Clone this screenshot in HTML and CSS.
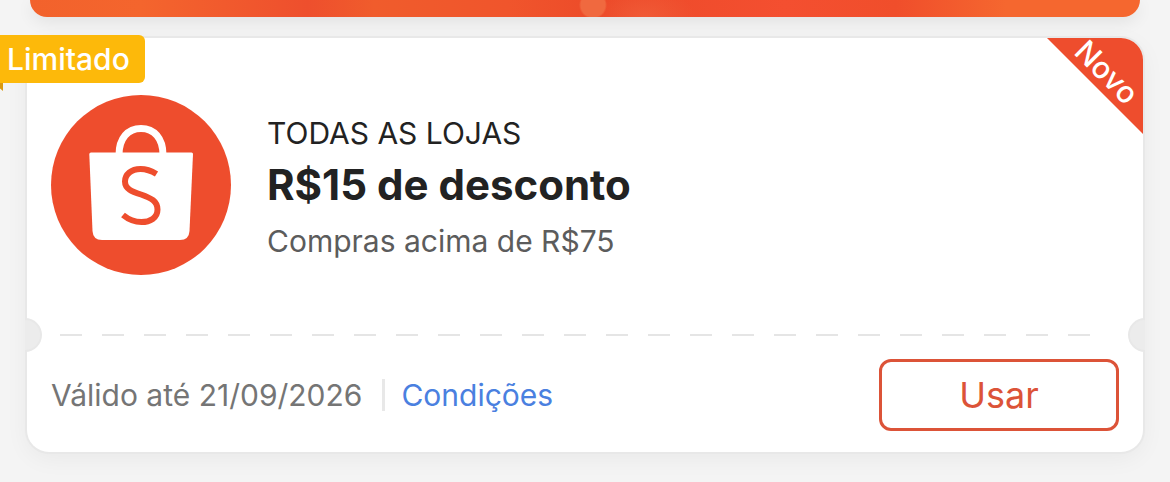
FILE: index.html
```html
<!DOCTYPE html>
<html lang="pt-BR">
<head>
<meta charset="utf-8">
<meta name="viewport" content="width=device-width, initial-scale=1">
<title>Cupons</title>
<link rel="stylesheet" href="styles.css">
</head>
<body>
<div class="banner"></div>
<main class="voucher">
  <span class="tag">Limitado</span>
  <div class="ribbon"><span class="ribbon-text">Novo</span></div>
  <section class="offer">
    <svg class="logo" viewBox="0 0 180 180" aria-hidden="true">
      <circle cx="90" cy="90" r="90" fill="#ee4d2d"/>
      <path d="M68 60C68 43 77 33.500 90 33.500S112 43 112 60" fill="none" stroke="#fff" stroke-width="7"/>
      <path d="M40 57.500H140.500Q142 57.500 142 59L138.500 136Q138 145 129 145H51Q42 145 41.500 136L38.300 59Q38.300 57.500 40 57.500Z" fill="#fff"/>
      <path d="M105.500 79C99 75 94 74 89.500 74C80 74 74 79.500 74 86.500C74 94 81 96.500 90 99.500C100 103 106.500 106 106.500 114.500C106.500 123 99 127 90.500 127C83 127 77.500 124.500 72 120" fill="none" stroke="#ee4d2d" stroke-width="6"/>
    </svg>
    <div class="details">
      <p class="scope">TODAS AS LOJAS</p>
      <h1 class="title">R$15 de desconto</h1>
      <p class="minimum">Compras acima de R$75</p>
    </div>
  </section>
  <div class="tear"><i class="notch notch-left"></i><i class="dashes"></i><i class="notch notch-right"></i></div>
  <footer class="actions">
    <span class="validity">Válido até 21/09/2026</span>
    <a class="terms" href="#">Condições</a>
    <button class="use" type="button">Usar</button>
  </footer>
</main>
</body>
</html>
```
FILE: styles.css
```css
* { box-sizing: border-box; }
body {
  margin: 0;
  background: #f4f4f4;
  font-family: Inter, "Liberation Sans", sans-serif;
  overflow-x: hidden;
}
.banner {
  height: 17px;
  margin: 0 30px;
  border-radius: 0 0 18px 18px;
  background:
    radial-gradient(circle at 563px 5px, #f0693f 12px, transparent 14px),
    radial-gradient(ellipse at 502px 0, #f07a4f 4px, transparent 14px),
    radial-gradient(ellipse 50px 30px at 615px 17px, #f05a36, transparent),
    linear-gradient(90deg, #f2622c 0, #f4652d 10%, #ee4f2d 25%, #f05c2c 31%, #f0552c 43%, #ec4a29 52%, #f44f30 68%, #f04e2b 78%, #f5672f 88%, #f5672f 100%);
  box-shadow: 0 5px 16px rgba(0, 0, 0, .08);
}
.voucher {
  position: relative;
  margin: 21px 27px 30px;
  border-radius: 22px;
  background: #fff;
  box-shadow: 0 0 0 2px #e8e8e8, 0 6px 24px rgba(0, 0, 0, .05);
}
.tag {
  position: absolute;
  top: -3px;
  left: -27px;
  padding: 0 15px 0 7px;
  border-radius: 0 6px 6px 0;
  background: #fdb90a;
  color: #fff;
  font-size: 30px;
  font-weight: 500;
  line-height: 48px;
}
.tag::after {
  content: "";
  position: absolute;
  top: 100%;
  left: 0;
  width: 3px;
  height: 8px;
  background: #d99a12;
  clip-path: polygon(0 0, 100% 0, 100% 100%, 0 70%);
}
.ribbon {
  position: absolute;
  top: 0;
  right: 0;
  width: 96px;
  height: 96px;
  border-radius: 0 22px 0 0;
  background: #ee4d2d;
  clip-path: polygon(0 0, 100% 0, 100% 100%);
}
.ribbon-text {
  position: absolute;
  top: 18px;
  left: 20px;
  width: 80px;
  color: #fff;
  font-size: 30px;
  font-weight: 500;
  line-height: 32px;
  text-align: center;
  transform: rotate(45deg);
}
.offer {
  display: flex;
  gap: 36px;
  padding: 57px 24px 43px;
}
.logo {
  flex: none;
  width: 180px;
  height: 180px;
}
.details { padding-top: 18px; }
.scope, .title, .minimum { margin: 0; }
.scope {
  color: #222;
  font-size: 30px;
  line-height: 40px;
}
.title {
  padding: 4px 0;
  color: #222;
  font-size: 42px;
  font-weight: 700;
  line-height: 56px;
}
.minimum {
  color: #5c5c5c;
  font-size: 30px;
  line-height: 48px;
}
.tear {
  display: flex;
  align-items: center;
  justify-content: space-between;
  margin: 0 -2px;
}
.notch {
  width: 17px;
  height: 34px;
  border: 2px solid #e8e8e8;
  background: #ececec;
}
.notch-left {
  border-left: 0;
  border-radius: 0 17px 17px 0;
}
.notch-right {
  border-right: 0;
  border-radius: 17px 0 0 17px;
}
.dashes {
  flex: 1;
  height: 2px;
  margin: 0 37px 0 18px;
  background: repeating-linear-gradient(90deg, #e5e5e5 0 22px, transparent 22px 42px);
}
.actions {
  display: flex;
  align-items: center;
  padding: 7px 24px 21px;
  font-size: 30px;
}
.validity { color: #757575; }
.terms {
  margin-left: 20px;
  padding-left: 16px;
  border-left: 3px solid #e8e8e8;
  color: #4a80e0;
  line-height: 32px;
  text-decoration: none;
}
.use {
  width: 240px;
  height: 72px;
  margin-left: auto;
  border: 3px solid #dc5338;
  border-radius: 12px;
  background: #fff;
  color: #dc5338;
  font: 36px Inter, "Liberation Sans", sans-serif;
}
```
